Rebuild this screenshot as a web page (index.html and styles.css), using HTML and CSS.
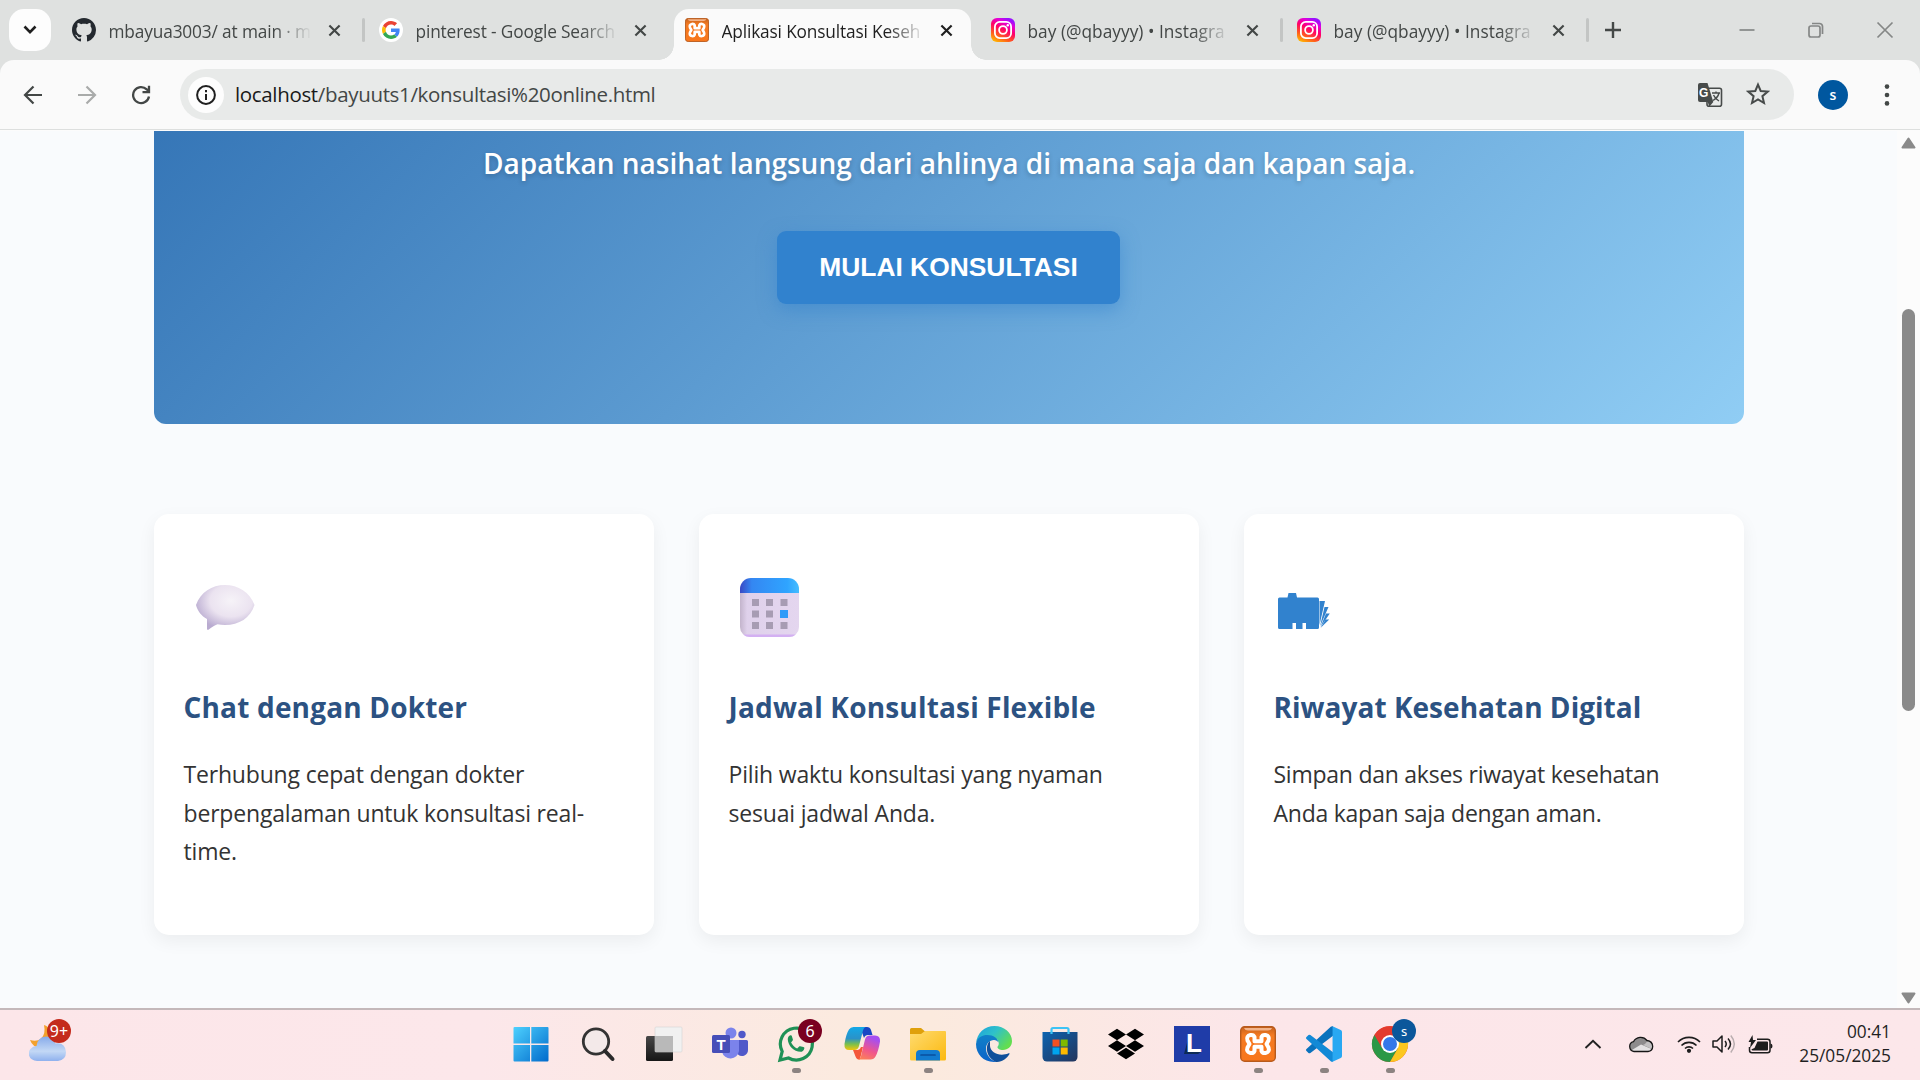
FILE: index.html
```html
<!DOCTYPE html>
<html lang="id">
<head>
<meta charset="utf-8">
<title>Aplikasi Konsultasi Kesehatan</title>
<link rel="stylesheet" href="styles.css">
</head>
<body>
<svg class="defs" width="0" height="0" aria-hidden="true">
  <defs>
    <linearGradient id="ig" x1="0.1" y1="1" x2="0.6" y2="0"><stop offset="0" stop-color="#ffc400"/><stop offset=".3" stop-color="#ff5a1f"/><stop offset=".6" stop-color="#ff0069"/><stop offset=".85" stop-color="#e400d8"/><stop offset="1" stop-color="#9a10ff"/></linearGradient>
    <linearGradient id="xampp-bg" x1="0" y1="0" x2="0" y2="1"><stop offset="0" stop-color="#c4601c"/><stop offset=".25" stop-color="#f47a22"/><stop offset="1" stop-color="#f8771c"/></linearGradient>
    <linearGradient id="win" gradientUnits="userSpaceOnUse" x1="0" y1="0" x2="36" y2="36"><stop offset="0" stop-color="#4fd3ff"/><stop offset="1" stop-color="#0069cb"/></linearGradient>
    <symbol id="i-close" viewBox="0 0 14 14"><path d="M1.500 1.500l11 11M12.500 1.500l-11 11" fill="none" stroke="currentColor" stroke-width="2.300"/></symbol>
    <symbol id="i-insta" viewBox="0 0 24 24">
      <rect width="24" height="24" rx="6" fill="url(#ig)"/>
      <g fill="none" stroke="#fff" stroke-width="1.800"><rect x="3.900" y="3.900" width="16.200" height="16.200" rx="4.800"/><circle cx="12" cy="12" r="3.900"/></g><circle cx="16.800" cy="7.300" r="1.200" fill="#fff"/>
    </symbol>
    <symbol id="i-xampp" viewBox="0 0 36 36">
      <rect x=".7" y=".7" width="34.600" height="34.600" rx="4" fill="url(#xampp-bg)" stroke="#b85a1c" stroke-width="1.400"/>
      <path d="M4 2h28q-1 2.500-4 2.500H8Q5 4.500 4 2z" fill="#f3b48a"/>
      <path d="M14.500 15.200h7V11q1-2.500 4-2 4.500 1 3 5.500l-2 3.500 2 3.500q1.500 4.500-3 5.500-3 .5-4-2v-4.200h-7V25q-1 2.500-4 2-4.500-1-3-5.500l2-3.500-2-3.500q-1.500-4.500 3-5.500 3-.5 4 2z" fill="#f8771c" stroke="#fff" stroke-width="4" stroke-linejoin="round"/>
    </symbol>
  </defs>
</svg>

<header class="tabstrip">
  <button class="tab-search"><svg width="14" height="10" viewBox="0 0 14 10"><path d="M1.500 1.500L7 7.200l5.500-5.700" fill="none" stroke="#1f1f1f" stroke-width="2.600"/></svg></button>
  <div class="tab">
    <svg class="fav" viewBox="0 0 16 16"><path fill="#24292f" d="M8 0C3.580 0 0 3.580 0 8c0 3.540 2.290 6.530 5.470 7.590.4.07.55-.17.55-.38 0-.19-.01-.82-.01-1.490-2.010.37-2.530-.49-2.690-.94-.09-.23-.48-.94-.82-1.130-.28-.15-.68-.52-.01-.53.63-.01 1.080.58 1.230.82.72 1.210 1.870.87 2.330.66.07-.52.28-.87.51-1.070-1.780-.2-3.640-.89-3.640-3.950 0-.87.31-1.590.82-2.150-.08-.2-.36-1.020.08-2.120 0 0 .67-.21 2.200.82.64-.18 1.320-.27 2-.27s1.360.09 2 .27c1.530-1.040 2.200-.82 2.200-.82.44 1.100.16 1.920.08 2.120.51.56.82 1.270.82 2.150 0 3.070-1.870 3.750-3.650 3.950.29.25.54.73.54 1.480 0 1.070-.01 1.930-.01 2.200 0 .21.15.46.55.38A8.010 8.010 0 0 0 16 8c0-4.420-3.580-8-8-8z"/></svg>
    <span class="title">mbayua3003/ at main · m</span>
    <svg class="close"><use href="#i-close"/></svg>
  </div>
  <i class="sep"></i>
  <div class="tab">
    <svg class="fav" viewBox="0 0 24 24"><circle cx="12" cy="12" r="12" fill="#fff"/><g transform="translate(3 3) scale(.375)"><path fill="#EA4335" d="M24 9.500c3.540 0 6.710 1.220 9.210 3.600l6.850-6.850C35.900 2.380 30.470 0 24 0 14.620 0 6.510 5.380 2.560 13.220l7.980 6.190C12.430 13.720 17.740 9.500 24 9.500z"/><path fill="#4285F4" d="M46.980 24.550c0-1.570-.15-3.090-.38-4.550H24v9.020h12.940c-.58 2.960-2.260 5.480-4.780 7.180l7.730 6c4.510-4.180 7.090-10.360 7.090-17.650z"/><path fill="#FBBC05" d="M10.530 28.590c-.48-1.450-.76-2.990-.76-4.590s.27-3.140.76-4.590l-7.980-6.190C.92 16.460 0 20.120 0 24c0 3.880.92 7.540 2.560 10.780l7.970-6.190z"/><path fill="#34A853" d="M24 48c6.480 0 11.930-2.130 15.890-5.810l-7.730-6c-2.150 1.450-4.920 2.300-8.160 2.300-6.260 0-11.570-4.220-13.470-9.910l-7.980 6.190C6.510 42.620 14.620 48 24 48z"/></g></svg>
    <span class="title">pinterest - Google Search</span>
    <svg class="close"><use href="#i-close"/></svg>
  </div>
  <i class="sep hidden"></i>
  <div class="tab active">
    <svg class="fav"><use href="#i-xampp"/></svg>
    <span class="title">Aplikasi Konsultasi Keseh</span>
    <svg class="close"><use href="#i-close"/></svg>
  </div>
  <i class="sep hidden"></i>
  <div class="tab">
    <svg class="fav"><use href="#i-insta"/></svg>
    <span class="title wide">bay (@qbayyy) • Instagra</span>
    <svg class="close"><use href="#i-close"/></svg>
  </div>
  <i class="sep"></i>
  <div class="tab">
    <svg class="fav"><use href="#i-insta"/></svg>
    <span class="title wide">bay (@qbayyy) • Instagra</span>
    <svg class="close"><use href="#i-close"/></svg>
  </div>
  <i class="sep"></i>
  <svg class="new-tab" width="16" height="16" viewBox="0 0 16 16"><path d="M8 0v16M0 8h16" stroke="#444847" stroke-width="2.400"/></svg>
  <div class="window-controls">
    <svg width="18" height="18" viewBox="0 0 18 18"><path d="M1.500 9h15" stroke="#858786" stroke-width="1.700"/></svg>
    <svg width="18" height="18" viewBox="0 0 18 18" fill="none" stroke="#858786" stroke-width="1.700"><rect x="2" y="5" width="11" height="11" rx="2"/><path d="M5 2.500h7.500a3 3 0 0 1 3 3V13"/></svg>
    <svg width="18" height="18" viewBox="0 0 18 18"><path d="M1.500 1.500l15 15M16.500 1.500l-15 15" stroke="#858786" stroke-width="1.700"/></svg>
  </div>
</header>

<nav class="toolbar">
  <div class="nav-buttons">
    <svg width="20" height="20" viewBox="0 0 20 20" fill="none" stroke="#434746" stroke-width="2.200"><path d="M19 10H2.500M10.500 1.500L2 10l8.500 8.500"/></svg>
    <svg width="20" height="20" viewBox="0 0 20 20" fill="none" stroke="#a9abaa" stroke-width="2.200"><path d="M1 10h16.500M9.500 1.500L18 10l-8.500 8.500"/></svg>
    <svg width="20" height="20" viewBox="0 0 20 20" fill="none" stroke="#434746" stroke-width="2.300"><path d="M18 11.500a8 8 0 1 1-2.300-7.200L17.800 6.500M18 .8v6.400h-6.500"/></svg>
  </div>
  <div class="omnibox">
    <span class="site-info"><svg width="20" height="20" viewBox="0 0 20 20"><circle cx="10" cy="10" r="8.900" fill="none" stroke="#1f1f1f" stroke-width="2"/><path d="M10 9v6M10 5v2.200" stroke="#1f1f1f" stroke-width="2"/></svg></span>
    <span class="url"><b>localhost</b>/bayuuts1/konsultasi%20online.html</span>
    <svg class="translate" width="26" height="26" viewBox="0 0 26 26"><rect x="10" y="6.200" width="14.500" height="18" rx="2" fill="none" stroke="#474b4a" stroke-width="1.600"/><path d="M3 1h7.500l5.800 19H3a2 2 0 0 1-2-2V3a2 2 0 0 1 2-2z" fill="#474b4a"/><path d="M16.300 20l-4 4.800-1.600-4.800z" fill="#474b4a"/><path d="M15 11h8M19 9.500V11M22 11q-1 4.500-6 7.500M16.500 13q1.500 3.500 5.500 6" fill="none" stroke="#474b4a" stroke-width="1.400"/><text x="2" y="15" font-family="Liberation Sans" font-weight="700" font-size="12" fill="#fff">G</text></svg>
    <svg class="star" width="24" height="24" viewBox="0 0 24 24"><path d="M12 2.600l2.700 6.400 7 .6-5.300 4.600 1.600 6.800-6-3.600L6 21l1.600-6.800L2.300 9.600l7-.6z" fill="none" stroke="#474b4a" stroke-width="2"/></svg>
  </div>
  <span class="avatar">s</span>
  <svg class="menu" width="6" height="22" viewBox="0 0 6 22" fill="#434746"><circle cx="3" cy="2.600" r="2.300"/><circle cx="3" cy="11" r="2.300"/><circle cx="3" cy="19.400" r="2.300"/></svg>
</nav>

<div class="viewport">
  <main class="page">
    <section class="hero">
      <p>Dapatkan nasihat langsung dari ahlinya di mana saja dan kapan saja.</p>
      <button class="cta">MULAI KONSULTASI</button>
    </section>
    <section class="features">
      <article class="card">
        <svg class="icon" width="82" height="96" viewBox="0 0 82 96">
          <defs><radialGradient id="bub" cx=".6" cy=".35" r=".65"><stop offset="0" stop-color="#f6f3f8"/><stop offset=".55" stop-color="#ebe3f0"/><stop offset="1" stop-color="#b9abd0"/></radialGradient></defs>
          <path d="M12 47C16.500 34 28 27 41 27s25 7 29.500 20c-4 13-15.500 20-29.500 20-2.500 0-5-.3-7.500-.7-3 1-6 3-9 5.400-1 .3-1.700 0-1.500-1V61C17.500 58 13.500 53 12 47z" fill="url(#bub)"/>
        </svg>
        <h3>Chat dengan Dokter</h3>
        <p>Terhubung cepat dengan dokter<br>berpengalaman untuk konsultasi real-<br>time.</p>
      </article>
      <article class="card">
        <svg class="icon" width="82" height="96" viewBox="0 0 82 96">
          <defs><linearGradient id="calt" x1="0" x2="1"><stop offset="0" stop-color="#3948c4"/><stop offset=".2" stop-color="#3487f2"/><stop offset=".8" stop-color="#2fa4ff"/><stop offset="1" stop-color="#45bdff"/></linearGradient><linearGradient id="calb" x1="0" x2="1"><stop offset="0" stop-color="#c3b4cc"/><stop offset=".12" stop-color="#dfd1eb"/><stop offset="1" stop-color="#e4d6ef"/></linearGradient></defs>
          <path d="M11 34h59v35a10 10 0 0 1-10 10H21a10 10 0 0 1-10-10z" fill="url(#calb)"/>
          <path d="M14 76.500q3 2.500 7 2.500h39q4 0 7-2.500z" fill="#d3b0f2"/>
          <path d="M11 35v-4a11 11 0 0 1 11-11h37a11 11 0 0 1 11 11v4z" fill="url(#calt)"/>
          <g fill="#a79cb3"><path d="M23 41h7v7h-7zM37 41h7v7h-7zM51.500 41h7v7h-7zM23 52.500h7v7h-7zM37 52.500h7v7h-7zM23 64h7v7h-7zM37 64h7v7h-7zM51.500 64h7v7h-7z"/></g><path d="M51 52h8v8h-8z" fill="#2f9bf8"/>
        </svg>
        <h3>Jadwal Konsultasi Flexible</h3>
        <p>Pilih waktu konsultasi yang nyaman<br>sesuai jadwal Anda.</p>
      </article>
      <article class="card last">
        <svg class="icon" width="82" height="96" viewBox="0 0 82 96">
          <path d="M5.500 39.500H13.500l1-4.500h7.500l1 4.500h20.500a1.500 1.500 0 0 1 1.500 1.500V69.500a1.500 1.500 0 0 1-1.500 1.500H32v-6h-3.500v6h-6.500v-6h-3.500v6H5.500A1.500 1.500 0 0 1 4 69.500V41a1.500 1.500 0 0 1 1.500-1.500z" fill="#3182ce"/>
          <g fill="#3182ce"><path d="M45.500 43h5.500l-5.500 24z"/><path d="M50.500 49h4L46 68.500z"/><path d="M52 55.500h3.800L46.500 69z"/><path d="M51.500 61.500h3.700L46.500 70z"/></g>
        </svg>
        <h3>Riwayat Kesehatan Digital</h3>
        <p>Simpan dan akses riwayat kesehatan<br>Anda kapan saja dengan aman.</p>
      </article>
    </section>
  </main>
  <div class="scrollbar">
    <svg width="15" height="12" viewBox="0 0 15 12"><path d="M7.500 1.500L13.500 10.500H1.500z" fill="#8a8a8a" stroke="#8a8a8a" stroke-width="2" stroke-linejoin="round"/></svg>
    <i class="thumb"></i>
    <svg class="down" width="15" height="12" viewBox="0 0 15 12"><path d="M7.500 10.500L13.500 1.500H1.500z" fill="#8a8a8a" stroke="#8a8a8a" stroke-width="2" stroke-linejoin="round"/></svg>
  </div>
</div>

<footer class="taskbar">
  <div class="weather">
    <svg width="38" height="38" viewBox="0 0 38 38"><defs><linearGradient id="cl" x1="0" y1="0" x2="0" y2="1"><stop offset="0" stop-color="#86aaea"/><stop offset=".6" stop-color="#c3d8f5"/><stop offset="1" stop-color="#8fb1ee"/></linearGradient></defs>
      <path d="M15 0q2 9-3 13.500Q8 17 1 15q3 8 11 7.500l10-6V6q-3-5-7-6z" fill="#f3a12c"/>
      <path d="M9 36A8.500 7.500 0 0 1 7.500 21q1-9 9.500-9.500 7 0 9.500 7Q36 17 37 27q0 8-8 9z" fill="url(#cl)"/></svg>
    <span class="badge red">9+</span>
  </div>
  <div class="apps">
    <div class="app"><svg viewBox="0 0 36 36"><g transform="translate(-1 0)" fill="url(#win)"><path d="M1.500 1H17v16.500H.5V2a1 1 0 0 1 1-1zM18.300 1H34.500a1 1 0 0 1 1 1v15.500H18.300zM.5 19H17v16.500H1.500a1 1 0 0 1-1-1zM18.300 19h17.200v15.500a1 1 0 0 1-1 1H18.300z"/></g></svg></div>
    <div class="app"><svg viewBox="0 0 36 36"><circle cx="16" cy="15.500" r="12.700" fill="#f3e9e9" stroke="#333" stroke-width="2.800"/><path d="M25 25l7.500 8" stroke="#2a2a2a" stroke-width="4" stroke-linecap="round"/></svg></div>
    <div class="app"><svg viewBox="0 0 36 36"><defs><linearGradient id="tv" x1="0" y1="0" x2="0" y2="1"><stop offset="0" stop-color="#474747"/><stop offset="1" stop-color="#161616"/></linearGradient></defs><rect y="10" width="27" height="25" rx="1.500" fill="url(#tv)"/><rect x="9" y="1" width="27" height="25" rx="1" fill="#f1f1f1" stroke="#d5d5d5" stroke-width=".6"/><path d="M9 10h18v16H9z" fill="#b9b9b9"/></svg></div>
    <div class="app"><svg viewBox="0 0 36 36"><circle cx="19" cy="7" r="5.500" fill="#7b83eb"/><circle cx="30" cy="8.500" r="3.700" fill="#5059c9"/><path d="M26 14h8.500a1.500 1.500 0 0 1 1.500 1.500V24a6 6 0 0 1-10 4.500z" fill="#5059c9"/><path d="M10 14h17v11a8.700 8.700 0 0 1-17 1z" fill="#7b83eb"/><rect y="9" width="18" height="18" rx="1.500" fill="#464eb8"/><text x="9" y="23.500" text-anchor="middle" font-family="Liberation Sans" font-weight="700" font-size="15" fill="#fff">T</text></svg></div>
    <div class="app running"><svg viewBox="0 0 36 36"><path d="M2 34l2.200-8.500A16 16 0 1 1 10.500 32z" fill="none" stroke="#1f9156" stroke-width="3.200"/><path transform="translate(7 6.500) scale(.92)" fill="#1f9156" d="M6.620 10.790c1.440 2.830 3.760 5.140 6.590 6.590l2.200-2.200c.27-.27.67-.36 1.020-.24l3.570.9c.75.2 1.300.7 1 1.500C20.500 20 18.500 21 17 21 9.500 20.500 3.500 14.500 3 7.500 3 5.500 4 3.700 6 3.100c.8-.2 1.300.2 1.500.9l1.070 3.570c.11.35.03.74-.25 1.020z"/></svg><span class="badge maroon">6</span></div>
    <div class="app"><svg viewBox="0 0 36 36"><defs><linearGradient id="cp1" x1="0" y1="0" x2="0" y2="1"><stop offset="0" stop-color="#12a8e8"/><stop offset=".5" stop-color="#2a92c8"/><stop offset=".75" stop-color="#7cc04b"/><stop offset="1" stop-color="#f2c60d"/></linearGradient><linearGradient id="cp2" x1="0" y1="1" x2=".4" y2="0"><stop offset="0" stop-color="#ff8a4c"/><stop offset=".5" stop-color="#f0568c"/><stop offset="1" stop-color="#a64ff0"/></linearGradient></defs><path d="M16 1h7q3 0 4 3l1.500 5H24q-3 0-4 3z" fill="#1747c4"/><path d="M9 24h5q2 0 3-3l2 0-2.500 10q-1 2.500-.5 2.500h-1q-2.500 0-3.500-3z" fill="#f4563a"/><path d="M9.500 1H22q-2 0-3 3.500L15 20q-1 4-4.500 4H5q-5 0-4.500-6Q2 8 5 3.500 6.500 1 9.500 1z" fill="url(#cp1)"/><path d="M26.500 33.500H13q3 0 4-3.500l4-16.500q1-4 5-4h5q5.500 0 5 6-1.500 9.500-4.500 15-1.500 3-5 3z" fill="url(#cp2)"/></svg></div>
    <div class="app running"><svg viewBox="0 0 36 36"><defs><linearGradient id="fo" x1="0" y1="0" x2="1" y2="1"><stop offset="0" stop-color="#ffdb70"/><stop offset="1" stop-color="#fbb90f"/></linearGradient></defs><path d="M0 3.500A1.500 1.500 0 0 1 1.500 2H11l3.500 3H20v5H0z" fill="#dfa00b"/><path d="M0 8h11l4-3h20a1 1 0 0 1 1 1v27a1.500 1.500 0 0 1-1.500 1.500h-33A1.500 1.500 0 0 1 0 33z" fill="url(#fo)"/><path d="M6 34.500V28q0-4 4-4h16q4 0 4 4v6.500z" fill="#127bd0"/><path d="M11 29h14" stroke="#0a4f9e" stroke-width="1.700" stroke-linecap="round"/></svg></div>
    <div class="app"><svg viewBox="0 0 36 36"><defs><linearGradient id="e1" x1="0" y1="0" x2="1" y2=".6"><stop offset="0" stop-color="#1a9fe0"/><stop offset=".5" stop-color="#2fc1c9"/><stop offset="1" stop-color="#63de4f"/></linearGradient><linearGradient id="e2" x1="0" y1="0" x2="0" y2="1"><stop offset="0" stop-color="#1181c9"/><stop offset="1" stop-color="#0b63c9"/></linearGradient></defs><path d="M0 17C1 7 8.500 0 18.500 0 28.500 0 36 7 36 15c0 5.500-4 9-9 9-3.500 0-5.800-1.500-5.500-3.200 2.500-2.500 1.500-8-4-9.300C9 9.500 2 12 0 17z" fill="url(#e1)"/><path d="M0 18C1 11.500 6 9 11.500 9c6 0 10.500 3.500 11 7.500-1-1.500-2.500-2.500-4.500-2.500-4.500 0-8 4-8 8.500C10 29 15 35 21 35.700 9 37.500 0 29 0 18z" fill="url(#e2)"/><path d="M14 15C9 19 9.500 31 20 35.900c6 .5 11-3.500 13.500-7.900.3-.8-.3-1-.9-.7C24 31 14.500 27 14 20z" fill="#10509b"/></svg></div>
    <div class="app"><svg viewBox="0 0 36 36"><defs><linearGradient id="st" x1="0" y1="0" x2="1" y2="1"><stop offset="0" stop-color="#0c63b0"/><stop offset="1" stop-color="#24355c"/></linearGradient></defs><path d="M.5 6h35v25a4.500 4.500 0 0 1-4.500 4.500H5A4.500 4.500 0 0 1 .5 31z" fill="url(#st)"/><path d="M9.500 8V3.500q0-1.500 1.500-1.500h14q1.500 0 1.500 1.500V8" fill="none" stroke="#3cc3f5" stroke-width="2.200"/><path d="M10.500 13.500h7v7h-7z" fill="#f25022"/><path d="M18.700 13.500h7v7h-7z" fill="#7fba00"/><path d="M10.500 21.500h7v7h-7z" fill="#00a4ef"/><path d="M18.700 21.500h7v7h-7z" fill="#ffb900"/></svg></div>
    <div class="app"><svg viewBox="0 0 24 24"><path d="M6 1.807L0 5.629l6 3.822 6.001-3.822L6 1.807zM18 1.807l-6 3.822 6 3.822 6-3.822-6-3.822zM0 13.274l6 3.822 6.001-3.822L6 9.452l-6 3.822zM18 9.452l-6 3.822 6 3.822 6-3.822-6-3.822zM6 18.371l6.001 3.822 6-3.822-6-3.822L6 18.371z"/></svg></div>
    <div class="app"><svg viewBox="0 0 36 36"><path d="M0 0h36v36H0z" fill="#1f3ca8"/><path d="M13.500 15L10 28h14l3-2H13.500z" fill="#0c2a55"/><text x="12" y="26" font-family="Liberation Sans" font-weight="700" font-size="26" fill="#fff">L</text></svg></div>
    <div class="app running"><svg><use href="#i-xampp"/></svg></div>
    <div class="app running"><svg viewBox="0 0 24 24"><path d="M18 6.550L2.930 17.990a1 1 0 0 1-1.280-.05L.33 16.740a1 1 0 0 1 0-1.480L16.500.5A1.500 1.500 0 0 1 18 .2z" fill="#0a72bd"/><path d="M18 17.450L2.930 6a1 1 0 0 0-1.280.06L.33 7.260a1 1 0 0 0 0 1.480L16.500 23.500a1.500 1.500 0 0 0 1.500.3z" fill="#1289d6"/><path d="M17.700.1l5.450 2.490A1.500 1.500 0 0 1 24 3.940v16.120a1.500 1.500 0 0 1-.85 1.350L17.700 23.900z" fill="#29a8f2"/></svg></div>
    <div class="app running"><svg viewBox="0 0 36 36"><circle cx="18" cy="18" r="18" fill="#ea4335"/><path d="M2.400 9A18 18 0 0 0 18 36l7.800-13.500L18 18z" fill="#2b9846"/><path d="M33.600 9A18 18 0 0 1 18 36l7.800-13.500V9z" fill="#fcc720"/><path d="M2.400 9L10 22l8-12h15.600A18 18 0 0 0 2.400 9z" fill="#e33b2e"/><circle cx="18" cy="18" r="9" fill="#fff"/><circle cx="18" cy="18" r="7" fill="#3478ea"/></svg><span class="badge blue">s</span></div>
  </div>
  <div class="tray">
    <svg width="18" height="10" viewBox="0 0 18 10"><path d="M1.500 9L9 1.800 16.500 9" fill="none" stroke="#222" stroke-width="1.900"/></svg>
    <svg class="cloud" width="26" height="18" viewBox="0 0 26 18"><path d="M6 16.500a5 5 0 0 1-.5-9.800A8 8 0 0 1 19 5.500q5.500.8 5.700 6-.2 4.500-4.700 5z" fill="#8d8b8c"/><path d="M4 15l9-5.500L23.500 14q-1.500 2.500-4 2.500H6z" fill="#e3e1e2"/><path d="M17 9l3-3.500q4.500 1 4.700 6L24 14l-9-4z" fill="#c2c0c1"/><path d="M6 16.500a5 5 0 0 1-.5-9.800A8 8 0 0 1 19 5.500q5.500.8 5.700 6-.2 4.500-4.700 5z" fill="none" stroke="#151515" stroke-width="1.300"/></svg>
    <svg class="wifi" width="24" height="18" viewBox="0 0 24 18" fill="none" stroke="#1d1d1d" stroke-width="1.600"><path d="M1 7a15.500 15.500 0 0 1 22 0M4.500 10.500a10.500 10.500 0 0 1 15 0M8 13.500a5.700 5.700 0 0 1 8 0"/><circle cx="12" cy="15.800" r="1.300" fill="#1d1d1d"/></svg>
    <svg class="sound" width="24" height="20" viewBox="0 0 24 20" fill="none" stroke="#1d1d1d" stroke-width="1.500"><path d="M1 7v6h4l5 5V2L5 7z" stroke-linejoin="round"/><path d="M13 7q2.500 3 0 6M16 4.500q5 5.500 0 11"/><path d="M18.800 1.500q7 8.500 0 17" stroke="#b9adaf"/></svg>
    <svg class="battery" width="25" height="19" viewBox="0 0 25 19"><path d="M9 4.200h10.500A2.500 2.500 0 0 1 22 6.700v8.600a2.500 2.500 0 0 1-2.500 2.500H4a2.500 2.500 0 0 1-2.500-2.500V12" fill="none" stroke="#1d1d1d" stroke-width="1.500"/><path d="M9.500 6.500h9.500a1 1 0 0 1 1 1v7a1 1 0 0 1-1 1H4.500q-1-.2-1-1.200l3-1.300z" fill="#1d1d1d"/><path d="M22.500 8.500q2 0 2 2.500t-2 2.500z" fill="#1d1d1d"/><path d="M4.500 0L.5 7H3l-1 6 6-8H5z" fill="#1d1d1d"/></svg>
    <div class="clock"><span>00:41</span><span>25/05/2025</span></div>
  </div>
</footer>
</body>
</html>
```
FILE: styles.css
```css
* { box-sizing: border-box; }
body {
  margin: 0; width: 1920px; height: 1080px; overflow: hidden;
  display: flex; flex-direction: column;
  font-family: "Open Sans", "Noto Sans", sans-serif;
  background: #dfe1e0;
}
svg { display: block; flex: none; }
.defs { position: absolute; }
button { border: 0; font: inherit; padding: 0; }

/* Tab strip */
.tabstrip { height: 60px; flex: none; display: flex; align-items: center; padding: 9px 0 0 9px; background: #dfe1e0; color: #434746; }
.tab-search { width: 42px; height: 42px; border-radius: 15px; background: #fdfdfd; display: grid; place-items: center; margin: 0 10px 9px 0; }
.tab-search + .tab { width: 298px; }
.tab { width: 297px; height: 51px; display: flex; align-items: center; padding: 0 18px 9px 11px; flex: none; }
.fav { width: 24px; height: 24px; }
.title { width: 212px; margin-left: 12.500px; white-space: nowrap; font-size: 17.300px; letter-spacing: -.15px; line-height: 24px; padding-top: 3px; -webkit-mask-image: linear-gradient(90deg, #000 165px, transparent 203px); mask-image: linear-gradient(90deg, #000 165px, transparent 203px); }
.title.wide { letter-spacing: .02px; }
.close { width: 13px; height: 13px; margin-left: auto; }
.sep { width: 3px; height: 24px; margin: 0 3px 9px; border-radius: 2px; background: #c3c5c4; flex: none; }
.sep.hidden { visibility: hidden; }
.tab.active { background: #fafafa; border-radius: 15px 15px 0 0; color: #1f1f1f; position: relative; }
.tab.active::before, .tab.active::after { content: ""; position: absolute; bottom: 0; width: 15px; height: 15px; }
.tab.active::before { left: -15px; background: radial-gradient(circle at 0 0, transparent 14.500px, #fafafa 15px); }
.tab.active::after { right: -15px; background: radial-gradient(circle at 100% 0, transparent 14.500px, #fafafa 15px); }
.new-tab { margin: 0 0 9px 13px; }
.window-controls { display: flex; gap: 51px; margin: 0 26px 10px auto; }

/* Toolbar */
.toolbar { height: 70px; flex: none; display: flex; align-items: center; background: #fafafa; border-bottom: 1px solid #dddfde; border-radius: 14px 14px 0 0; padding-left: 23px; }
.nav-buttons { display: flex; gap: 34px; width: 157px; }
.omnibox { width: 1614px; height: 51px; border-radius: 26px; background: #e8eae9; display: flex; align-items: center; padding-left: 8px; }
.site-info { width: 36px; height: 36px; border-radius: 50%; background: #fdfdfd; display: grid; place-items: center; }
.url { margin-left: 11px; font-size: 20.500px; letter-spacing: -.34px; color: #434746; flex: 1; white-space: nowrap; line-height: 28px; padding-bottom: 1px; }
.url b { font-weight: 400; color: #1a1a1a; }
.star { margin: 0 24px 2px 23px; }
.avatar { width: 30px; height: 30px; border-radius: 50%; background: #00579f; color: #fff; font-size: 14px; font-weight: 600; line-height: 29px; text-align: center; margin-left: 24px; }
.menu { margin-left: 36px; }

/* Page */
.viewport { height: 878px; flex: none; display: flex; overflow: hidden; background: #f9fbfd; border-top: 1px solid #fcfcfc; }
.page { width: 1897px; padding: 0 153px 0 154px; }
.hero { height: 517px; margin-top: -224px; padding-top: 233px; border-radius: 12px; background: linear-gradient(135deg, #2b6cb0, #90cdf4); display: flex; flex-direction: column; align-items: center; }
.hero p { margin: 0; height: 46px; line-height: 46px; font-size: 28px; font-weight: 600; color: #fff; text-shadow: 0 2px 5px rgba(0, 0, 0, .2); white-space: nowrap; }
.cta { margin: 45px 1px 0 0; width: 343px; height: 73px; border-radius: 9px; background: #3182ce; color: #fff; font: 700 26.400px "Liberation Sans", Arial, sans-serif; box-shadow: 0 6px 18px rgba(49, 130, 206, .5); }
.features { display: grid; grid-template-columns: repeat(3, 1fr); gap: 45px; margin-top: 90px; }
.card { height: 421px; padding: 44px 29.500px; border-radius: 15px; background: #fff; box-shadow: 0 6px 18px rgba(0, 0, 0, .06); white-space: nowrap; }
.card h3 { margin: 30px 0 0; font-size: 28px; letter-spacing: .18px; line-height: 46px; color: #2c5282; }
.card p { margin: 25px 0 0; font-size: 23px; letter-spacing: -.18px; line-height: 38.500px; color: #333; }
.card.last h3 { letter-spacing: .03px; }
.card.last p { letter-spacing: -.25px; }
.scrollbar { width: 23px; background: #fcfcfc; display: flex; flex-direction: column; align-items: center; padding: 6px 0 4px; }
.thumb { width: 13px; height: 402px; border-radius: 7px; background: #8a8a8a; margin-top: 160px; }
.down { margin-top: auto; }

/* Taskbar */
.taskbar { height: 72px; flex: none; border-top: 2px solid #c4b8ba; display: flex; align-items: center; position: relative; background: linear-gradient(90deg, #fce6e9 0, #fce7ea 480px, #fbeadf 850px, #fbeade 930px, #fce6e9 1250px, #fce7ea 100%); }
.weather { position: relative; margin: 0 0 2px 29px; width: 38px; height: 38px; }
.badge { position: absolute; width: 24px; height: 24px; border-radius: 50%; color: #fff; font: 16px/24px "Noto Sans", sans-serif; text-align: center; }
.red { background: #c42b1c; left: 18px; top: -6px; }
.maroon { background: #7a0020; left: 35px; top: 9px; }
.blue { background: #0b579b; left: 35px; top: 9px; font-size: 13px; }
.apps { display: flex; margin-left: 432px; height: 70px; }
.app { width: 66px; height: 70px; padding: 16px 15px 0; position: relative; }
.app svg { width: 36px; height: 36px; overflow: visible; }
.running::after { content: ""; position: absolute; left: 29px; top: 58px; width: 9px; height: 5px; border-radius: 3px; background: #8c8381; }
.tray { margin: 0 29px 0 auto; display: flex; align-items: center; }
.tray > svg { margin-bottom: 2px; }
.cloud { margin-left: 26px; }
.wifi { margin-left: 23px; }
.sound { margin-left: 11px; }
.battery { margin-left: 12px; }
.clock { width: 118px; display: flex; flex-direction: column; align-items: flex-end; font-size: 17.300px; line-height: 24px; color: #1f1f1f; padding-bottom: 3px; }
```
